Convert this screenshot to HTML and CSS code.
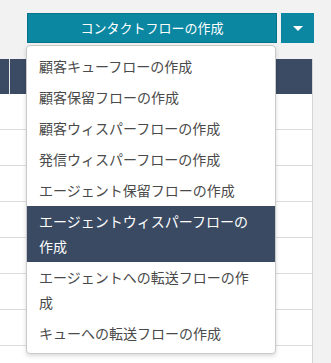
FILE: index.html
```html
<!DOCTYPE html>
<html lang="ja">
<head>
  <meta charset="UTF-8">
  <meta name="viewport" content="width=device-width, initial-scale=1.0">
  <title>コンタクトフロー</title>
  <link rel="stylesheet" href="styles.css">
</head>
<body>
  <div class="toolbar">
    <div class="split">
      <button class="main-btn">コンタクトフローの作成</button>
      <button class="arrow-btn"><span class="caret"></span></button>

      <!-- ドロップダウンメニュー -->
      <ul class="menu">
        <li>顧客キューフローの作成</li>
        <li>顧客保留フローの作成</li>
        <li>顧客ウィスパーフローの作成</li>
        <li>発信ウィスパーフローの作成</li>
        <li>エージェント保留フローの作成</li>
        <li class="active">エージェントウィスパーフローの作成</li>
        <li>エージェントへの転送フローの作成</li>
        <li>キューへの転送フローの作成</li>
      </ul>
    </div>
  </div>

  <div class="table">
    <div class="thead">
      <div class="th first"></div>
      <div class="th"></div>
    </div>
    <div class="row"></div>
    <div class="row"></div>
    <div class="row"></div>
    <div class="row"></div>
    <div class="row"></div>
    <div class="row"></div>
    <div class="row"></div>
    <div class="row"></div>
  </div>
</body>
</html>
```

FILE: styles.css
```css
body {
  margin: 0;
  background-color: #f2f2f2;
  font-family: "Noto Sans CJK JP", "Noto Sans", sans-serif;
  overflow: hidden;
}

.toolbar {
  display: flex;
  justify-content: flex-end;
  padding: 13px 17px 0 0;
}

.split {
  position: relative;
  display: flex;
  gap: 4px;
}

button {
  border: none;
  margin: 0;
  padding: 0;
  font-family: inherit;
  cursor: pointer;
}

.main-btn {
  width: 250px;
  height: 30px;
  background-color: #0b87a2;
  border: 1px solid #08718a;
  color: #fff;
  font-size: 13px;
  line-height: 28px;
}

.arrow-btn {
  width: 33px;
  height: 30px;
  background-color: #0b87a2;
  display: flex;
  align-items: center;
  justify-content: center;
}

.caret {
  width: 0;
  height: 0;
  border-left: 5px solid transparent;
  border-right: 5px solid transparent;
  border-top: 5px solid #fff;
}

.menu {
  position: absolute;
  top: 32px;
  left: -1px;
  width: 248px;
  margin: 0;
  padding: 5px 0 4px;
  list-style: none;
  background-color: #fff;
  border: 1px solid #c9c9c9;
  border-radius: 4px;
  box-shadow: 0 2px 4px rgba(0, 0, 0, 0.15);
  z-index: 10;
}

.menu li {
  padding: 3px 20px 3px 12px;
  font-size: 14px;
  line-height: 25px;
  color: #4a4a4a;
}

.menu li.active {
  background-color: #3a4a63;
  color: #fff;
}

.table {
  margin-top: 16px;
  width: 312px;
  height: 304px;
  overflow: hidden;
  border-right: 1px solid #d6d6d6;
  background-color: #fff;
}

.thead {
  display: flex;
  height: 35px;
  background-color: #3b4b63;
}

.th {
  flex: 1;
}

.th.first {
  flex: 0 0 9px;
  border-right: 1px solid #e8e8e8;
}

.row {
  height: 35px;
  border-bottom: 1px solid #dcdcdc;
}
```
